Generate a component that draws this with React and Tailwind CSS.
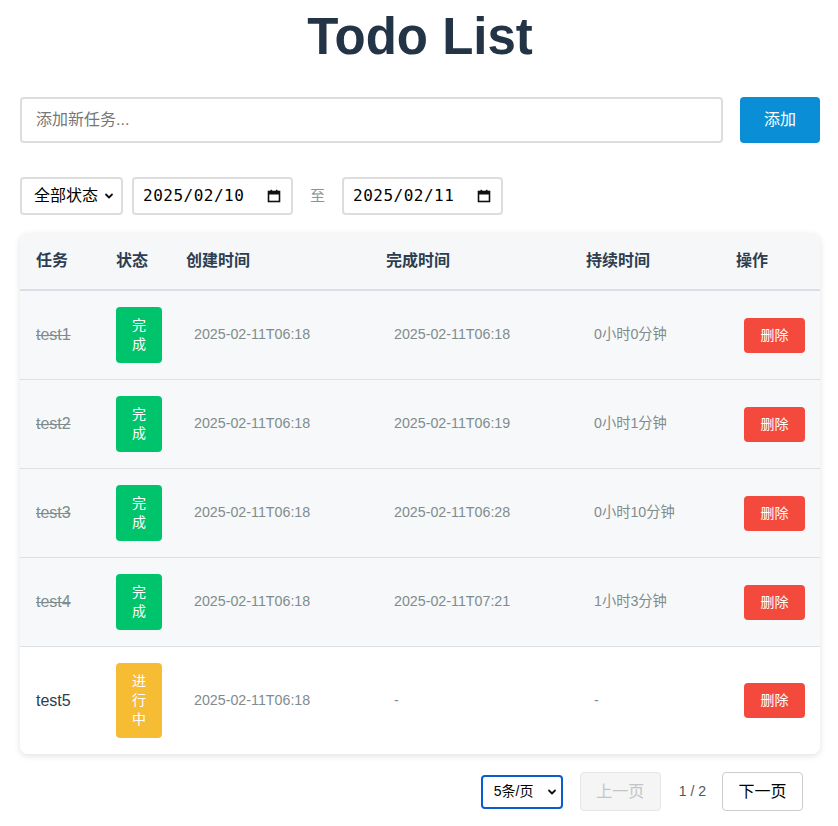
import React from "react";

const rows = [
  { name: "test1", done: true, created: "2025-02-11T06:18", finished: "2025-02-11T06:18", dur: "0小时0分钟" },
  { name: "test2", done: true, created: "2025-02-11T06:18", finished: "2025-02-11T06:19", dur: "0小时1分钟" },
  { name: "test3", done: true, created: "2025-02-11T06:18", finished: "2025-02-11T06:28", dur: "0小时10分钟" },
  { name: "test4", done: true, created: "2025-02-11T06:18", finished: "2025-02-11T07:21", dur: "1小时3分钟" },
  { name: "test5", done: false, created: "2025-02-11T06:18", finished: "-", dur: "-" },
];

const font = "font-['Liberation_Sans','Noto_Sans_CJK_SC',sans-serif]";

function Chevron({ className }) {
  return (
    <svg className={className} width="10" height="10" viewBox="0 0 10 10" fill="none">
      <path d="M2 3.5 L5 6.5 L8 3.5" stroke="#111" strokeWidth="1.8" strokeLinecap="round" strokeLinejoin="round" />
    </svg>
  );
}

function CalIcon() {
  return (
    <svg width="14" height="14" viewBox="0 0 14 14" fill="none">
      <rect x="1.5" y="2.5" width="11" height="10" stroke="#111" strokeWidth="1.6" fill="none" />
      <rect x="1.5" y="2.5" width="11" height="3" fill="#111" />
      <rect x="3.5" y="0.8" width="1.6" height="2.5" fill="#111" />
      <rect x="8.9" y="0.8" width="1.6" height="2.5" fill="#111" />
    </svg>
  );
}

function DateBox({ value }) {
  return (
    <div className="w-[161px] h-[38px] border-2 border-[#dddddd] rounded-[4px] bg-white flex items-center pl-[9px] pr-[10px] justify-between">
      <span className="font-['DejaVu_Sans_Mono',monospace] text-[16px] tracking-[0.5px] text-black">{value}</span>
      <CalIcon />
    </div>
  );
}

export default function App() {
  return (
    <div className={`${font} bg-white min-h-[826px] w-[838px]`}>
      <div className="w-[800px] ml-[20px]">
        <h1 className="text-center text-[51px] font-bold leading-none text-[#243447] pt-[11px] pb-[35px]">Todo List</h1>

        <div className="flex gap-[17px]">
          <div className="flex-1 h-[46px] border-2 border-[#dddddd] rounded-[4px] flex items-center px-[14px]">
            <span className="text-[16px] text-[#777]">添加新任务...</span>
          </div>
          <button className="w-[80px] h-[46px] bg-[#0a8fd6] rounded-[4px] text-white text-[16px]">添加</button>
        </div>

        <div className="flex items-center mt-[34px] gap-[9px]">
          <div className="w-[103px] h-[38px] border-2 border-[#dddddd] rounded-[4px] bg-white flex items-center justify-between pl-[12px] pr-[7px]">
            <span className="text-[16px] text-black">全部状态</span>
            <Chevron />
          </div>
          <DateBox value="2025/02/10" />
          <span className="mx-[8px] text-[15px] text-[#8a9597] w-[15px]">至</span>
          <DateBox value="2025/02/11" />
        </div>

        <div className="mt-[18px] rounded-[8px] bg-white shadow-[0_2px_6px_rgba(0,0,0,0.12)] overflow-hidden">
          <div className="grid grid-cols-[80px_70px_200px_200px_150px_100px] h-[58px] items-center bg-[#f6f7f9] border-b-2 border-[#d9dfe5] text-[16px] font-bold text-[#2c3e50]">
            <div className="pl-4">任务</div>
            <div className="pl-4">状态</div>
            <div className="pl-4">创建时间</div>
            <div className="pl-4">完成时间</div>
            <div className="pl-4">持续时间</div>
            <div className="pl-4">操作</div>
          </div>
          {rows.map((r, i) => (
            <div
              key={r.name}
              className={`grid grid-cols-[80px_70px_200px_200px_150px_100px] items-center py-4 ${r.done ? "bg-[#f7f8fa]" : "bg-white"} ${i < rows.length - 1 ? "border-b border-[#dde1e5]" : ""}`}
            >
              <div className={`pl-4 text-[16px] ${r.done ? "line-through text-[#7f8c8d]" : "text-[#2c3e50]"}`}>{r.name}</div>
              <div className="pl-4">
                <div className={`w-[46px] rounded-[4px] py-[9px] text-center text-white text-[14px] leading-[19px] flex flex-col items-center ${r.done ? "bg-[#00c46c]" : "bg-[#f6bc34]"}`}>
                  {(r.done ? "完成" : "进行中").split("").map((c, k) => (
                    <span key={k}>{c}</span>
                  ))}
                </div>
              </div>
              <div className="pl-6 text-[14.25px] text-[#7f8c8d]">{r.created}</div>
              <div className="pl-6 text-[14.25px] text-[#7f8c8d]">{r.finished}</div>
              <div className="pl-6 text-[14.25px] text-[#7f8c8d]">{r.dur}</div>
              <div className="pl-6">
                <button className="w-[61px] h-[35px] bg-[#f44a3e] rounded-[4px] text-white text-[14px]">删除</button>
              </div>
            </div>
          ))}
        </div>

        <div className="flex justify-end items-center mt-[18px] pr-[17px]">
          <div className="w-[82px] h-[34px] border-2 border-[#0b5cd0] rounded-[4px] flex items-center justify-between pl-[11px] pr-[4px]">
            <span className="text-[14px] text-black">5条/页</span>
            <Chevron />
          </div>
          <button className="ml-[17px] w-[81px] h-[39px] bg-[#f5f5f5] border border-[#e6e6e6] rounded-[4px] text-[16px] text-[#c4c4c4]">上一页</button>
          <span className="ml-[18px] text-[14px] text-[#555]">1 / 2</span>
          <button className="ml-[16px] w-[81px] h-[39px] bg-white border border-[#cccccc] rounded-[4px] text-[16px] text-black">下一页</button>
        </div>
      </div>
    </div>
  );
}
